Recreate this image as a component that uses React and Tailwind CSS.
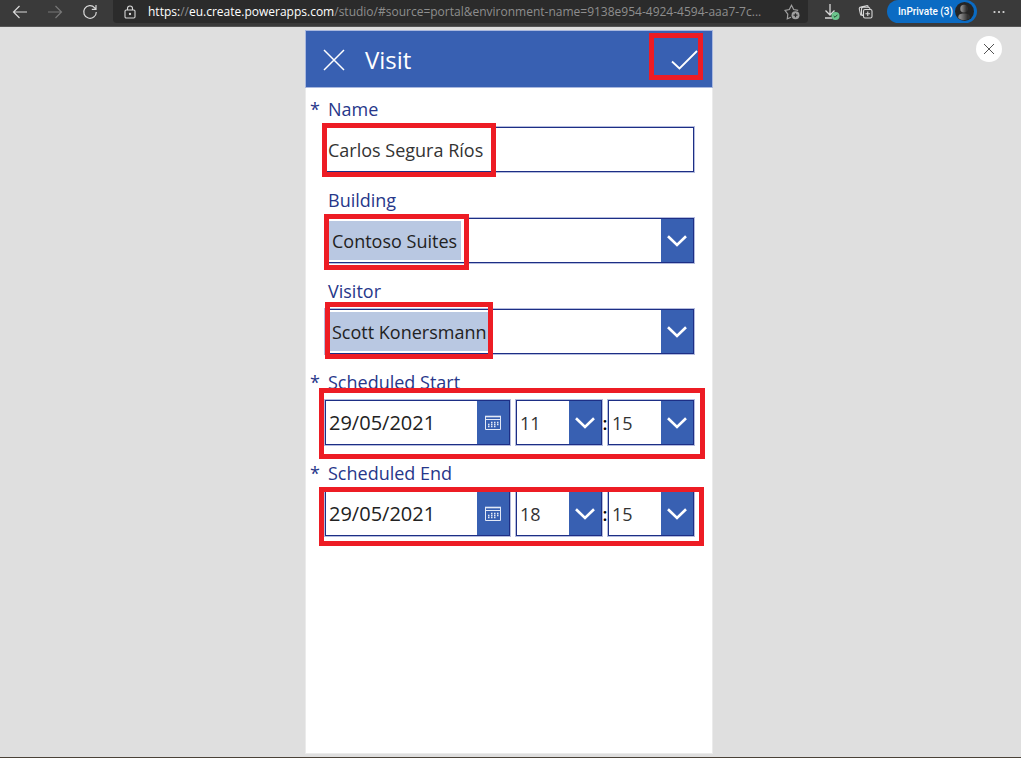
import React from "react";

const box = "border border-[#1d2e85] bg-white shadow-[0_0_0_1px_#b4bcde]";

function Highlight({ className }) {
  return <span aria-hidden="true" className={`pointer-events-none absolute z-10 border-5 border-[#ed1c24] ${className}`} />;
}

function Chevron() {
  return (
    <svg aria-hidden="true" viewBox="0 0 20 12" className="h-3 w-5" fill="none" stroke="white" strokeWidth="2.6">
      <path d="M1 1.2 10 10l9-8.8" />
    </svg>
  );
}

function CalendarIcon() {
  return (
    <svg aria-hidden="true" viewBox="0 0 16 16" className="size-4" fill="none" stroke="#e3e9f6" strokeWidth="1">
      <path d="M.5 1v13.500h15V1" />
      <path d="M0 1.500h16" strokeWidth="1.600" />
      <path d="M.5 4.500h15" />
      <path d="M6 7.500h1.500 M9 7.500h1.500 M12 7.500h1.500 M3 9.500h1.500 M6 9.500h1.500 M9 9.500h1.500 M12 9.500h1.500 M3 11.500h1.500 M6 11.500h1.500 M9 11.500h1.500" strokeWidth="1.300" />
    </svg>
  );
}

function Field({ id, label, required, children }) {
  return (
    <div className="mb-4">
      <div className="mb-[6px] flex h-6 items-center text-lg leading-6 text-[#27378a]">
        <span className="w-[22px] shrink-0 pl-1">{required ? "*" : ""}</span>
        <label htmlFor={id}>{label}</label>
      </div>
      <div className="relative mr-[18px] ml-[19px] h-[45px]">{children}</div>
    </div>
  );
}

function Lookup({ id, value }) {
  return (
    <div className={`flex h-full ${box}`}>
      <select id={id} defaultValue={value} className="my-[2px] ml-[3px] appearance-none bg-[#b9c8e2] pr-[3px] pl-[3px] text-lg text-[#222] outline-none">
        <option>{value}</option>
      </select>
      <label htmlFor={id} aria-label="Open list" className="ml-auto flex w-8 items-center justify-center bg-[#3860b2]">
        <Chevron />
      </label>
    </div>
  );
}

function TimeSelect({ label, value }) {
  return (
    <div className={`grid w-[86px] shrink-0 ${box}`}>
      <select aria-label={label} defaultValue={value} className="col-start-1 row-start-1 appearance-none pl-[3px] text-lg text-[#333] outline-none">
        <option>{value}</option>
      </select>
      <span className="pointer-events-none col-start-1 row-start-1 flex w-8 items-center justify-center justify-self-end bg-[#3860b2]">
        <Chevron />
      </span>
    </div>
  );
}

function DateTime({ id, label, date, hour, minute }) {
  return (
    <div className="flex h-full">
      <div className={`flex min-w-0 flex-1 ${box}`}>
        <input id={id} defaultValue={date} className="w-full min-w-0 flex-1 pl-[3px] text-xl text-[#222] outline-none" />
        <button type="button" aria-label={`${label} calendar`} className="flex w-8 shrink-0 items-center justify-center bg-[#3860b2]">
          <CalendarIcon />
        </button>
      </div>
      <span className="w-[6px] shrink-0" />
      <TimeSelect label={`${label} hour`} value={hour} />
      <span className="flex w-[6px] shrink-0 items-center justify-center text-lg font-semibold text-black">:</span>
      <TimeSelect label={`${label} minute`} value={minute} />
    </div>
  );
}

function BrowserBar() {
  return (
    <header className="flex h-[27px] shrink-0 items-start border-b border-[#555] bg-[#3a3a3a] text-[#d8d8d8]">
      <nav className="flex h-[23px] w-[113px] shrink-0 items-center gap-[19px] pl-3">
        <button type="button" aria-label="Back">
          <svg viewBox="0 0 16 16" className="size-4" fill="none" stroke="currentColor" strokeWidth="1.2"><path d="M15 8H1.500 M7.500 2 1.500 8l6 6" /></svg>
        </button>
        <button type="button" aria-label="Forward" className="text-[#777]">
          <svg viewBox="0 0 16 16" className="size-4" fill="none" stroke="currentColor" strokeWidth="1.2"><path d="M1 8h13.500 M8.500 2l6 6-6 6" /></svg>
        </button>
        <button type="button" aria-label="Reload">
          <svg viewBox="0 0 16 16" className="size-4" fill="none" stroke="currentColor" strokeWidth="1.200"><path d="M14.300 8A6.300 6.300 0 1 1 12.700 3.800L14 5.200 M14 1v4.300H9.800" /></svg>
        </button>
      </nav>
      <div className="flex h-[23px] min-w-0 flex-1 items-center rounded-b-sm bg-[#2b2b2b] pr-2 pl-[10px]">
        <svg aria-hidden="true" viewBox="0 0 14 14" className="size-[14px] shrink-0" fill="none" stroke="currentColor" strokeWidth="1.100">
          <rect x="2" y="5" width="10" height="8" rx="1.200" /><path d="M4.500 5V3.500a2.500 2.500 0 0 1 5 0V5" /><circle cx="7" cy="9" r=".6" fill="currentColor" />
        </svg>
        <div role="textbox" aria-label="Address" className="ml-[11px] min-w-0 flex-1 truncate text-xs leading-5 text-[#8e8e8e]">
          <span className="text-white">https:</span>//<span className="text-white">eu.create.powerapps.com</span>/studio/#source=portal&amp;environment-name=9138e954-4924-4594-aaa7-7c...
        </div>
        <button type="button" aria-label="Add to favorites" className="ml-2 shrink-0 text-[#a0a0a0]">
          <svg viewBox="0 0 16 16" className="size-4" fill="none" stroke="currentColor" strokeWidth="1.200">
            <path d="M7 13.200 3.300 14.700l.5-4.500L1 6.300l4.300-.8L7.500 1.300l2.200 4.200 4.500.8" /><circle cx="11.500" cy="11.200" r="4" fill="currentColor" stroke="none" /><path d="M9.500 11.200h4 M11.500 9.200v4" stroke="#2b2b2b" />
          </svg>
        </button>
      </div>
      <div className="flex h-[23px] shrink-0 items-center pl-4">
        <button type="button" aria-label="Downloads">
          <svg viewBox="0 0 16 18" className="h-[18px] w-4" fill="none" stroke="currentColor" strokeWidth="1.300">
            <path d="M6 1v11 M1.500 7.500 6 12l4.500-4.500 M1 15h7" /><circle cx="11.500" cy="13" r="4" fill="#6cc58d" stroke="none" /><path d="m9.700 13 1.300 1.300 2.500-2.600" stroke="#24452f" strokeWidth="1" />
          </svg>
        </button>
        <button type="button" aria-label="Collections" className="ml-[18px]">
          <svg viewBox="0 0 16 16" className="size-4" fill="none" stroke="currentColor" strokeWidth="1.100">
            <rect x="5.500" y="5.500" width="8.500" height="8.500" rx="1.500" /><path d="M9.750 7.500v4.500 M7.500 9.750H12 M3.500 11.500A2 2 0 0 1 2.400 10L1.300 5a1.600 1.600 0 0 1 1.300-1.900L8.500 1.700a1.600 1.600 0 0 1 1.900 1.200 M5.500 11.500A2 2 0 0 1 3.500 9.500V5A1.700 1.700 0 0 1 5.200 3.300h5A1.900 1.900 0 0 1 12 5.500" />
          </svg>
        </button>
        <button type="button" className="ml-[13px] flex h-[23px] w-[90px] items-center justify-between rounded-full bg-[#0b6bc3] pr-[3px] pl-[11px] font-[Roboto,sans-serif] text-[10px] leading-5 font-medium whitespace-nowrap text-white">
          InPrivate (3)
          <svg aria-hidden="true" viewBox="0 0 20 20" className="size-[19px] shrink-0">
            <defs><linearGradient id="person"><stop offset="0.200" stopColor="#888" /><stop offset="0.800" stopColor="#333" /></linearGradient></defs>
            <circle cx="10" cy="10" r="10" fill="#252525" /><circle cx="9.500" cy="7" r="4" fill="url(#person)" /><path d="M3.500 17c-.5-4 2-5 6-5s6.500 1 6 5a10 10 0 0 1-12 0Z" fill="url(#person)" />
          </svg>
        </button>
        <button type="button" aria-label="More" className="mr-[14px] ml-[14px]">
          <svg viewBox="0 0 16 16" className="size-4" fill="currentColor"><circle cx="3.500" cy="8" r="1.100" /><circle cx="8" cy="8" r="1.100" /><circle cx="12.500" cy="8" r="1.100" /></svg>
        </button>
      </div>
    </header>
  );
}

export default function App() {
  return (
    <div className="min-h-screen bg-white pr-2 pb-px font-['Open_Sans','Noto_Sans',sans-serif]">
      <div className="flex min-h-[calc(100vh-1px)] flex-col border-b border-[#4a4238] bg-[#dfdfdf]">
        <BrowserBar />
        <main className="grid flex-1 grid-cols-[1fr_minmax(0,406px)_1fr] pt-1 pr-[3px] pb-1">
          <form className="col-start-2 bg-white shadow-[0_0_0_1px_#ebebeb]" onSubmit={(e) => e.preventDefault()}>
            <div className="flex h-14 items-center bg-[#3860b2] pt-px pr-2 pl-4 text-white shadow-[0_0_0_1px_#a9b8de]">
              <button type="button" aria-label="Cancel" className="flex size-6 items-center justify-center">
                <svg viewBox="0 0 22 22" className="size-[22px]" fill="none" stroke="currentColor" strokeWidth="1.500"><path d="m1 1 20 20 M21 1 1 21" /></svg>
              </button>
              <h1 className="ml-[19px] text-2xl leading-8">Visit</h1>
              <button type="submit" aria-label="Save" className="relative ml-auto flex h-[47px] w-[55px] items-center justify-end pr-[6px]">
                <svg viewBox="0 0 27 20" className="h-5 w-[27px]" fill="none" stroke="currentColor" strokeWidth="1.800"><path d="m1 11.500 7.500 7L26 1" /></svg>
                <Highlight className="-top-[3px] left-0 h-[47px] w-[54px]" />
              </button>
            </div>
            <div className="pt-[10px]">
              <Field id="name" label="Name" required>
                <input id="name" defaultValue="Carlos Segura Ríos" className={`h-full w-full pl-[2px] text-lg text-[#333] outline-none ${box}`} />
                <Highlight className="-top-1 -left-[3px] h-[54px] w-[174px]" />
              </Field>
              <Field id="building" label="Building">
                <Lookup id="building" value="Contoso Suites" />
                <Highlight className="-top-1 -left-px h-14 w-[145px]" />
              </Field>
              <Field id="visitor" label="Visitor">
                <Lookup id="visitor" value="Scott Konersmann" />
                <Highlight className="-top-[7px] left-0 h-[57px] w-[168px]" />
              </Field>
              <Field id="start" label="Scheduled Start" required>
                <DateTime id="start" label="Scheduled Start" date="29/05/2021" hour="11" minute="15" />
                <Highlight className="-top-3 -left-[6px] h-[71px] w-[386px]" />
              </Field>
              <Field id="end" label="Scheduled End" required>
                <DateTime id="end" label="Scheduled End" date="29/05/2021" hour="18" minute="15" />
                <Highlight className="-top-1 -left-[6px] h-[59px] w-[385px]" />
              </Field>
            </div>
          </form>
          <div className="flex items-start justify-end pt-[5px] pr-4">
            <button type="button" aria-label="Close preview" className="flex size-[26px] items-center justify-center rounded-full bg-white text-[#555]">
              <svg viewBox="0 0 12 12" className="size-3" fill="none" stroke="currentColor" strokeWidth="1"><path d="m1 1 10 10 M11 1 1 11" /></svg>
            </button>
          </div>
        </main>
      </div>
    </div>
  );
}
